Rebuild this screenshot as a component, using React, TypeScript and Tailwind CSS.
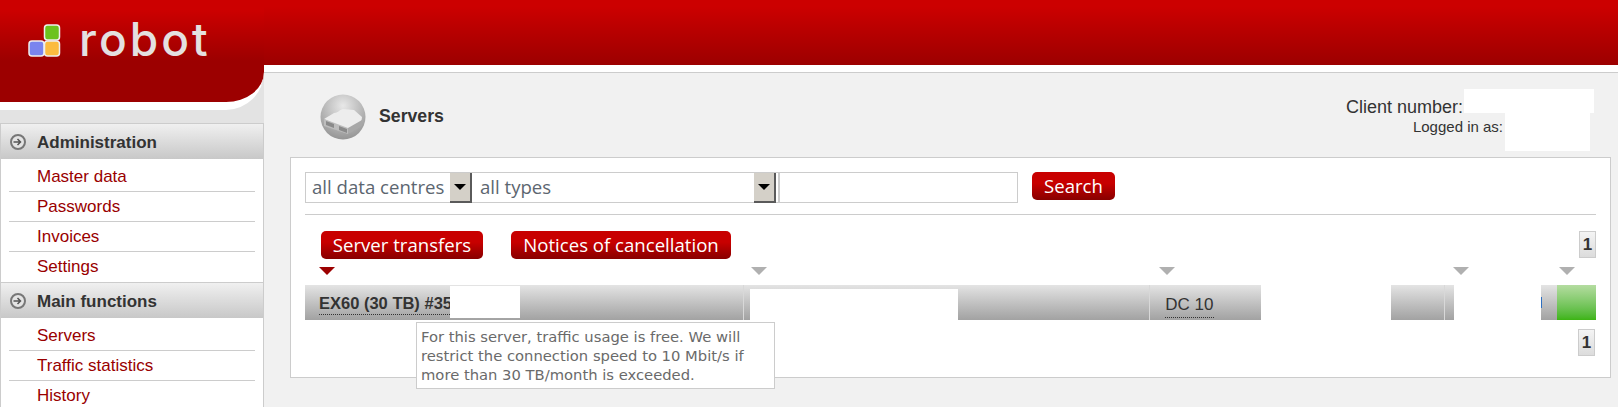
const sans = "font-['Liberation_Sans',Arial,sans-serif]"
const openSans = "font-['Open_Sans',sans-serif]"

const adminLinks = ['Master data', 'Passwords', 'Invoices', 'Settings']
const mainLinks = ['Servers', 'Traffic statistics', 'History']

function ArrowCircle() {
  return (
    <svg width="18" height="18" viewBox="0 0 18 18" className="-mt-[2px] shrink-0">
      <circle cx="9" cy="9" r="7" fill="#e4e4e4" stroke="#777" strokeWidth="2" />
      <path d="M4.5 9h7M8.5 6l3 3-3 3" fill="none" stroke="#555" strokeWidth="1.5" />
    </svg>
  )
}

function SideGroup({ title, links }: { title: string; links: string[] }) {
  return (
    <div>
      <div className="flex h-[35px] items-center gap-[10px] bg-linear-to-b from-[#f0f0f0] to-[#c8c8c8] pt-[2px] pl-2 text-[17px] font-bold text-[#333]">
        <ArrowCircle />
        {title}
      </div>
      <ul className="bg-white pt-[3px]">
        {links.map((link, index) => (
          <li key={link} className="mx-2">
            <a
              className={`flex h-[30px] items-center pl-[28px] text-[17px] text-[#990000] ${
                index < links.length - 1 ? 'border-b border-[#ccc]' : ''
              }`}
            >
              {link}
            </a>
          </li>
        ))}
      </ul>
    </div>
  )
}

function Logo() {
  return (
    <svg width="33" height="34" viewBox="0 0 33 34" className="shrink-0">
      <rect x="16.5" y="1" width="15" height="15" rx="3" fill="#6cc21e" stroke="#eee" strokeWidth="1.5" />
      <rect x="1" y="17" width="15" height="15" rx="3" fill="#7a84ee" stroke="#eee" strokeWidth="1.5" />
      <rect x="16.5" y="17" width="15" height="15" rx="3" fill="#fbbb40" stroke="#eee" strokeWidth="1.5" />
    </svg>
  )
}

function ServerIcon() {
  return (
    <svg width="46" height="46" viewBox="0 0 46 46" className="shrink-0">
      <defs>
        <radialGradient id="ball" cx="50%" cy="25%" r="80%">
          <stop offset="0" stopColor="#e8e8e8" />
          <stop offset="1" stopColor="#8f8f8f" />
        </radialGradient>
      </defs>
      <circle cx="23" cy="23" r="22.5" fill="url(#ball)" />
      <path d="M4 25l10-6c4 0 5-3 9-4l11 1 8 7-1 7-13 6z" fill="#ededed" />
      <path d="M4 25l24 9v6L4 32z" fill="#bdbdbd" />
      <path d="M6 27l8 3v4l-8-3zM19 32l8 3v4l-8-3z" fill="#8a8a8a" />
      <path d="M28 34l14-8v6l-14 8z" fill="#a8a8a8" />
    </svg>
  )
}

function Caret({ className }: { className: string }) {
  return (
    <div className={`flex h-[30px] w-[22px] shrink-0 items-center justify-center border-r-2 border-b-2 border-[#5a5a5a] bg-[#d4d0c8] ${className}`}>
      <div className="h-0 w-0 border-x-[6px] border-t-[6px] border-x-transparent border-t-black" />
    </div>
  )
}

function RedButton({ label, className }: { label: string; className: string }) {
  return (
    <button
      className={`flex h-7 items-center justify-center rounded-[5px] bg-linear-to-b from-[#c80000] from-40% to-[#880000] text-[18.6px] text-white ${openSans} ${className}`}
    >
      {label}
    </button>
  )
}

function PageBox() {
  return (
    <div className="flex h-[27px] w-[17px] items-center justify-center border border-[#ccc] bg-linear-to-b from-[#f4f4f4] to-[#dcdcdc] text-[17px] font-bold text-[#333]">
      1
    </div>
  )
}

function Triangle({ color, className }: { color: string; className: string }) {
  return (
    <svg width="16" height="8" viewBox="0 0 16 8" className={`shrink-0 ${className}`}>
      <polygon points="0,0 16,0 8,8" fill={color} />
    </svg>
  )
}

const cell = 'h-full bg-linear-to-b from-[#e4e4e4] to-[#a2a2a2]'

export default function App() {
  return (
    <div className={`flex h-[407px] w-[1618px] overflow-hidden bg-[#f1f1f1] ${sans}`}>
      <aside className="w-[264px] shrink-0 bg-[#e3e3e3]">
        <div className="h-[110px] rounded-br-[38px] border-b-[8px] border-white bg-linear-to-b from-[#cc0000] from-10% to-[#9c0000] to-60%">
          <div className="flex items-start gap-[18px] pt-[24px] pl-[28px]">
            <Logo />
            <span className="-mt-[2px] font-['Inter',sans-serif] text-[46px] leading-[34px] font-medium tracking-[3px] text-[#e4e0e0]">
              robot
            </span>
          </div>
        </div>
        <div className="mt-[13px] h-[284px] border-t border-r border-l border-[#ccc] bg-white">
          <SideGroup title="Administration" links={adminLinks} />
          <div className="border-t border-[#ccc]">
            <SideGroup title="Main functions" links={mainLinks} />
          </div>
        </div>
      </aside>

      <div className="min-w-0 flex-1">
        <div className="h-[65px] bg-linear-to-b from-[#cc0000] from-10% to-[#9c0000]" />
        <div className="h-2 border-b border-[#ccc] bg-white" />

        <div className="flex h-[84px] pr-[24px] pl-[56px]">
          <div className="flex items-center gap-[13px] pt-[4px] text-[17.7px] font-bold text-[#333]">
            <ServerIcon />
            <span className="-mt-[2px]">Servers</span>
          </div>
          <div className="ml-auto flex flex-col items-end pt-4 text-[#333]">
            <div className="flex h-[24px] items-start text-[18px]">
              <span className="pt-[5px]">Client number:</span>
              <span className="ml-px h-[24px] w-[130px] bg-white" />
            </div>
            <div className="flex h-[38px] pr-[4px] text-[15px]">
              <span className="pt-[3px]">Logged in as:</span>
              <span className="ml-[2px] h-[38px] w-[85px] bg-white" />
            </div>
          </div>
        </div>

        <main className="relative ml-[26px] h-[221px] w-[1321px] border border-[#ccc] bg-white px-[14px]">
          <div className="mt-[14px] flex items-start">
            <div className={`flex h-[31px] w-[713px] border border-[#ccc] text-[18.6px] text-[#5c6670] ${openSans}`}>
              <div className="flex w-[169px] items-center justify-between pl-[6px]">
                <span className="-mt-px">all data centres</span>
                <Caret className="mr-[3px]" />
              </div>
              <div className="flex w-[305px] items-center justify-between border-r-2 border-[#ccc] pl-[5px]">
                <span className="-mt-[2px]">all types</span>
                <Caret className="mr-[2px]" />
              </div>
            </div>
            <RedButton label="Search" className="ml-[14px] w-[83px]" />
          </div>
          <div className="mt-[11px] border-t border-[#ccc]" />

          <div className="mt-4 flex items-start pl-4">
            <RedButton label="Server transfers" className="w-[162px]" />
            <RedButton label="Notices of cancellation" className="ml-[28px] w-[220px]" />
            <div className="ml-auto">
              <PageBox />
            </div>
          </div>

          <div className="mt-2 flex pl-[14px]">
            <Triangle color="#9c0000" className="" />
            <Triangle color="#b0b0b0" className="ml-[416px]" />
            <Triangle color="#b0b0b0" className="ml-[392px]" />
            <Triangle color="#b0b0b0" className="ml-[278px]" />
            <Triangle color="#b0b0b0" className="ml-[90px]" />
          </div>

          <div className="mt-[10px] flex h-[35px]">
            <div className={`flex w-[439px] border-r border-[#d8d8d8] ${cell}`}>
              <a className="mt-[9px] ml-[14px] h-[21px] w-[131px] border-b border-dotted border-[#333] text-[16.5px] leading-[18px] font-bold whitespace-nowrap text-[#333]">
                EX60 (30 TB) #35
              </a>
              <span className="relative mt-px h-[32px] w-[70px] bg-white" />
            </div>
            <div className={`flex w-[407px] border-r border-[#d8d8d8] ${cell}`}>
              <span className="mt-1 ml-[6px] h-[31px] w-[208px] bg-white" />
            </div>
            <div className={`w-[111px] pt-2 pl-[15px] ${cell}`}>
              <a className="inline-block h-[22px] border-b border-dotted border-[#333] text-[17px] leading-[18px] text-[#333]">
                DC 10
              </a>
            </div>
            <div className="w-[130px]" />
            <div className={`w-[54px] border-r border-[#d8d8d8] ${cell}`} />
            <div className={`w-[9px] ${cell}`} />
            <div className="w-[87px]" />
            <div className={`w-4 pt-[12px] ${cell}`}>
              <div className="h-[11px] w-px bg-[#2f6fc0]" />
            </div>
            <div className="w-[39px] bg-linear-to-b from-[#b4dca0] to-[#3cb410]" />
          </div>

          <div className="mt-[9px] flex justify-end pr-[1px]">
            <PageBox />
          </div>

          <div className="absolute top-[164px] left-[125px] h-[67px] w-[359px] border border-[#ccc] bg-white px-[4px] pt-[4px] font-['DejaVu_Sans',sans-serif] text-[14.75px] leading-[19px] text-[#6a6a6a]">
            For this server, traffic usage is free. We will
            <br />
            restrict the connection speed to 10 Mbit/s if
            <br />
            more than 30 TB/month is exceeded.
          </div>
        </main>
      </div>
    </div>
  )
}
